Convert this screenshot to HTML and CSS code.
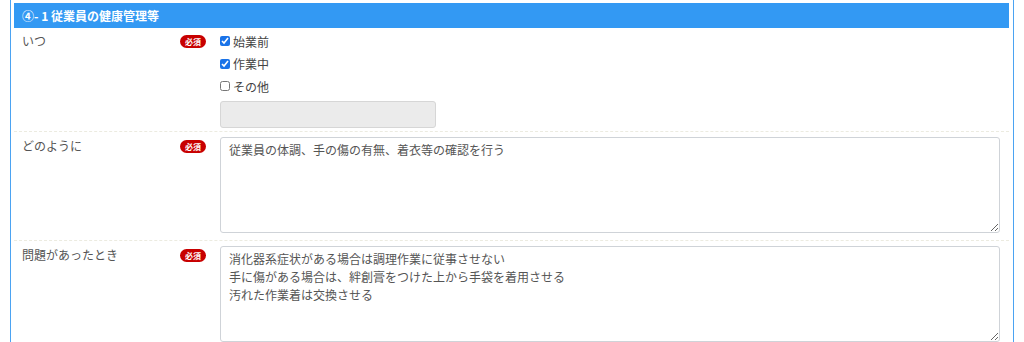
FILE: index.html
```html
<!DOCTYPE html>
<html lang="ja">
<head>
<meta charset="utf-8">
<link rel="stylesheet" href="styles.css">
</head>
<body>
<div class="panel">
  <div class="panel-head">④- 1 従業員の健康管理等</div>
  <div class="row">
    <div class="label"><span>いつ</span><span class="req">必須</span></div>
    <div class="field">
      <label class="chk"><input type="checkbox" checked>始業前</label>
      <label class="chk"><input type="checkbox" checked>作業中</label>
      <label class="chk"><input type="checkbox">その他</label>
      <input class="other" type="text" disabled>
    </div>
  </div>
  <div class="row row-ta">
    <div class="label"><span>どのように</span><span class="req">必須</span></div>
    <div class="field">
      <textarea class="ta">従業員の体調、手の傷の有無、着衣等の確認を行う</textarea>
    </div>
  </div>
  <div class="row row-ta">
    <div class="label"><span>問題があったとき</span><span class="req">必須</span></div>
    <div class="field">
      <textarea class="ta">消化器系症状がある場合は調理作業に従事させない
手に傷がある場合は、絆創膏をつけた上から手袋を着用させる
汚れた作業着は交換させる</textarea>
    </div>
  </div>
</div>
</body>
</html>
```
FILE: styles.css
```css
html, body {
  margin: 0;
  padding: 0;
  background: #fff;
  overflow: hidden;
}
body {
  font-family: "Noto Sans CJK JP", "Noto Sans", sans-serif;
  font-size: 12px;
  color: #555;
}
.panel {
  margin-left: 10px;
  width: 1004px;
  height: 342px;
  border-left: 1px solid #4ba3f2;
  border-right: 1px solid #4ba3f2;
  padding: 3px 4px 0 3px;
  box-sizing: border-box;
}
.panel-head {
  height: 25px;
  background: #3399f3;
  color: #fff;
  font-weight: bold;
  font-size: 12px;
  line-height: 25px;
  padding-left: 8px;
}
.row {
  display: flex;
  border-top: 1px dashed #ecebe0;
  padding: 2px 0 3px;
}
.panel-head + .row {
  border-top: none;
}
.row-ta {
  padding: 5px 0 7px;
}
.label {
  width: 199px;
  flex: none;
  display: flex;
  justify-content: space-between;
  align-items: flex-start;
  padding: 2px 7px 0 8px;
  box-sizing: border-box;
  line-height: 18px;
}
.row-ta .label {
  padding-top: 0;
}
.req {
  display: inline-block;
  background: #c80000;
  color: #fff;
  font-size: 8px;
  font-weight: bold;
  line-height: 13px;
  height: 13px;
  padding: 0 5px;
  border-radius: 7px;
  margin-top: 3px;
}
.field {
  flex: 1;
  padding-left: 7px;
  padding-right: 8px;
}
.chk {
  display: flex;
  align-items: center;
  height: 22.5px;
  font-size: 12px;
  color: #444;
}
.chk input {
  width: 10px;
  height: 10px;
  margin: 0 3px 0 0;
  accent-color: #1a73e8;
}
.other {
  display: block;
  margin-top: 3px;
  width: 216px;
  height: 27px;
  box-sizing: border-box;
  border: 1px solid #d6d6d6;
  border-radius: 3px;
  background: #ebebeb;
}
.ta {
  display: block;
  width: 780px;
  height: 96px;
  box-sizing: border-box;
  border: 1px solid #cfd3d8;
  border-radius: 3px;
  padding: 3px 8px;
  font-family: "Noto Sans CJK JP", "Noto Sans", sans-serif;
  font-size: 12px;
  line-height: 18px;
  color: #555;
  resize: vertical;
  margin: 0;
}
```
